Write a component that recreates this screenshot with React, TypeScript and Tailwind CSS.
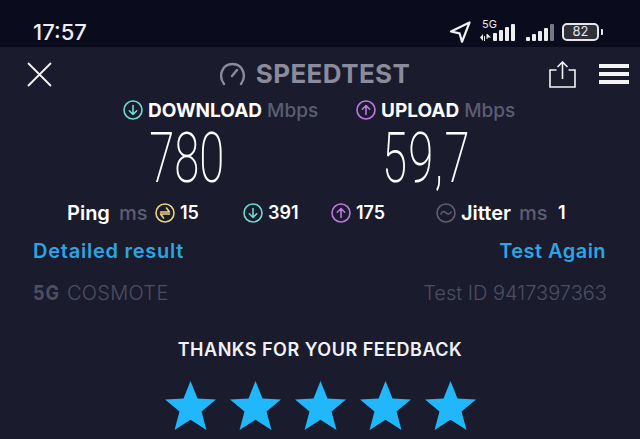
const sans = { fontFamily: "Inter, 'Open Sans', sans-serif" };
const thin = { fontFamily: "Roboto, sans-serif", fontWeight: 200 };

function Circle({ color, kind }: { color: string; kind: "down" | "up" | "ping" | "jitter" }) {
  return (
    <svg width="20" height="20" viewBox="0 0 20 20" fill="none" stroke={color} strokeWidth="1.600" strokeLinecap="round" strokeLinejoin="round" className="shrink-0">
      <circle cx="10" cy="10" r="9" />
      {kind === "down" && <path d="M10 5.500v9M6.300 10.800 10 14.500l3.700-3.700" />}
      {kind === "up" && <path d="M10 14.500v-9M6.300 9.200 10 5.500l3.700 3.700" />}
      {kind === "ping" && <path d="M5.500 9h9L11.500 5M14.500 11h-9l3 4" />}
      {kind === "jitter" && <path d="M5 11c1.200-3 3-3 4.500-1.500S13.500 12 15 9" />}
    </svg>
  );
}

function Star() {
  return (
    <svg width="51" height="49" viewBox="0 0 51 49" className="shrink-0">
      <path d="M25.500 0 32.500 17.500 51 18.500 36.500 30.500 41.500 49 25.500 38.800 9.500 49 14.500 30.500 0 18.500 18.500 17.500Z" fill="#20b8fb" />
    </svg>
  );
}

function Bars({ heights }: { heights: number[] }) {
  return (
    <>
      {heights.map((h) => (
        <span key={h} className="w-[4px] rounded-[1px] bg-[#eeeef0]" style={{ height: h }} />
      ))}
    </>
  );
}

export default function App() {
  return (
    <div className="w-[640px] h-[439px] overflow-hidden bg-[#1a1b2d] text-white flex flex-col" style={sans}>
      <div className="h-[47px] bg-[#0a0b1c] flex items-center pl-[33px] pr-[37px] pt-[16px] shrink-0">
        <span className="text-[22px] leading-none font-medium text-[#eceef2] flex-1">17:57</span>
        <svg width="22" height="22" viewBox="0 0 22 22" fill="none" stroke="#f2f2f4" strokeWidth="2.200" strokeLinejoin="round" className="mr-[9px]">
          <path d="M20.500 1.500 2 10.500l8.500 1.800 2.500 8.500z" />
        </svg>
        <div className="relative w-[39px] h-[18px] mr-[7px] flex items-end gap-[2px]">
          <span className="absolute left-[2px] top-[-4px] text-[11px] leading-none text-[#e8e8ec]">5G</span>
          <svg width="11" height="7" viewBox="0 0 11 7" fill="#eeeef0" className="shrink-0">
            <path d="M0 3.500 3 0v7zM4 2h1v5H4zM6.500 0h1v5h-1zM7.500 0 11 3.500H7.500z" />
          </svg>
          <Bars heights={[8, 11, 14, 17]} />
        </div>
        <div className="flex items-end gap-[2px] h-[18px] mr-[8px]">
          <Bars heights={[4, 7, 10, 13]} />
          <span className="w-[4px] h-[17px] rounded-[1px] bg-[#77787f]" />
        </div>
        <div className="w-[37px] h-[18px] rounded-[5px] border-2 border-[#e6e6ea] flex items-center justify-center text-[13px] leading-none text-[#e6e6ea] bg-[#2f3039]">82</div>
        <span className="w-[2px] h-[6px] ml-[2px] bg-[#e6e6ea] rounded-r-[1px]" />
      </div>

      <div className="h-[54px] flex items-center pl-[27px] pr-[11px] shrink-0">
        <svg width="25" height="25" viewBox="0 0 25 25" stroke="#f4f4f6" strokeWidth="1.800" className="shrink-0">
          <path d="M1 1 24 24M24 1 1 24" />
        </svg>
        <div className="flex-1 flex items-center justify-center gap-[10px] pl-[28px]">
          <svg width="27" height="24" viewBox="0 0 27 24" fill="none" stroke="#8a8c9b" strokeWidth="2.400" strokeLinecap="round">
            <path d="M5 22C-1 14 3 2 13.500 2S28 14 22 22M13 14l5-6" />
          </svg>
          <span className="text-[26px] tracking-[0.4px] leading-none font-bold text-[#8a8c9b]">SPEEDTEST</span>
        </div>
        <svg width="27" height="27" viewBox="0 0 27 27" fill="none" stroke="#f4f4f6" strokeWidth="1.600" className="mr-[23px] shrink-0">
          <path d="M7.500 9H1v17h25V9h-6.500M13.500 18V1M8.500 6l5-5 5 5" />
        </svg>
        <div className="w-[30px] flex flex-col gap-[4px] shrink-0">
          <span className="h-[4px] bg-[#f4f4f6]" />
          <span className="h-[4px] bg-[#f4f4f6]" />
          <span className="h-[4px] bg-[#f4f4f6]" />
        </div>
      </div>

      <div className="flex pl-[123px] h-[20px] items-center mt-[-1px] shrink-0 text-[19px] leading-none">
        <Circle color="#6fd9d3" kind="down" />
        <span className="ml-[5px] font-bold">DOWNLOAD</span>
        <span className="ml-[5px] font-medium text-[#5c5e70]">Mbps</span>
        <span className="w-[38px]" />
        <Circle color="#bf79e0" kind="up" />
        <span className="ml-[5px] font-bold">UPLOAD</span>
        <span className="ml-[5px] font-medium text-[#5c5e70]">Mbps</span>
      </div>

      <div className="flex h-[62px] items-center mt-[7px] shrink-0">
        <div className="w-[306px] flex justify-end pr-[61px]">
          <span className="block text-[70px] leading-[62px] scale-x-[0.65]" style={thin}>780</span>
        </div>
        <div className="w-[240px] flex justify-center">
          <span className="block text-[70px] leading-[62px] tracking-[2px] scale-x-[0.65]" style={thin}>59,7</span>
        </div>
      </div>

      <div className="flex items-center h-[24px] pl-[67px] mt-[12px] text-[20px] leading-none font-semibold shrink-0">
        <span className="w-[52px]">Ping</span>
        <span className="w-[36px] font-medium text-[#5c5e70]">ms</span>
        <Circle color="#e9d67a" kind="ping" />
        <span className="ml-[5px] w-[63px] text-[18px]">15</span>
        <Circle color="#6fd9d3" kind="down" />
        <span className="ml-[5px] w-[63px] text-[18px]">391</span>
        <Circle color="#bf79e0" kind="up" />
        <span className="ml-[5px] w-[80px] text-[18px]">175</span>
        <Circle color="#5f6172" kind="jitter" />
        <span className="ml-[5px] w-[58px]">Jitter</span>
        <span className="w-[39px] font-medium text-[#5c5e70]">ms</span>
        <span className="text-[18px]">1</span>
      </div>

      <div className="flex justify-between pl-[33px] pr-[34px] mt-[14px] text-[20px] leading-[24px] font-semibold text-[#2ba5e3] shrink-0">
        <span className="tracking-[0.75px]">Detailed result</span>
        <span className="tracking-[0.45px]">Test Again</span>
      </div>

      <div className="flex items-center justify-between pl-[33px] pr-[33px] mt-[18px] h-[24px] text-[20px] leading-none font-light text-[#4d4f60] shrink-0">
        <div className="flex items-center gap-[7px]">
          <span className="font-bold tracking-[1px] scale-x-90 origin-left w-[27px]">5G</span>
          <span className="tracking-[0.3px]">COSMOTE</span>
        </div>
        <span>Test ID 9417397363</span>
      </div>

      <div className="text-center mt-[33px] text-[18px] tracking-[0.5px] leading-[24px] font-semibold text-[#f2f2f5] shrink-0">THANKS FOR YOUR FEEDBACK</div>

      <div className="flex justify-center gap-[14px] mt-[19px] shrink-0">
        <Star /><Star /><Star /><Star /><Star />
      </div>
    </div>
  );
}
